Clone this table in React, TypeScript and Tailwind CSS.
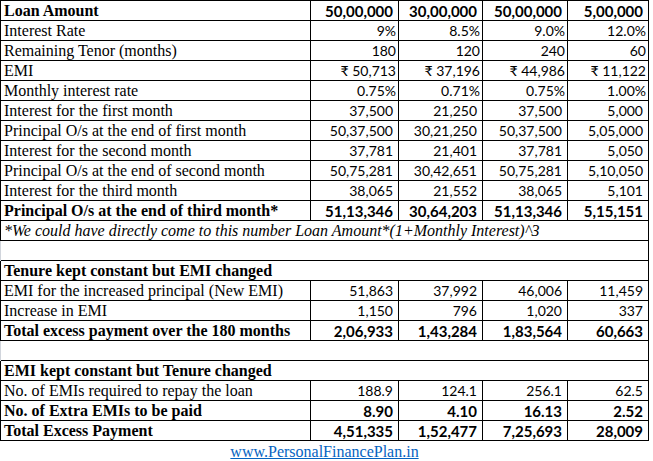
const serif = "font-['Liberation_Serif','DejaVu_Serif',serif]";
const num = "font-['Lato','Liberation_Sans',sans-serif]";

type Row = {
    label: string;
    values: string[];
    bold?: boolean;
    tight?: boolean;
};

const block1: Row[] = [
    { label: "Loan Amount", values: ["50,00,000", "30,00,000", "50,00,000", "5,00,000"], bold: true },
    { label: "Interest Rate", values: ["9%", "8.5%", "9.0%", "12.0%"], tight: true },
    { label: "Remaining Tenor (months)", values: ["180", "120", "240", "60"], tight: true },
    { label: "EMI", values: ["₹ 50,713", "₹ 37,196", "₹ 44,986", "₹ 11,122"], tight: true },
    { label: "Monthly interest rate", values: ["0.75%", "0.71%", "0.75%", "1.00%"], tight: true },
    { label: "Interest for the first month", values: ["37,500", "21,250", "37,500", "5,000"] },
    { label: "Principal O/s at the end of first month", values: ["50,37,500", "30,21,250", "50,37,500", "5,05,000"] },
    { label: "Interest for the second month", values: ["37,781", "21,401", "37,781", "5,050"] },
    { label: "Principal O/s at the end of second month", values: ["50,75,281", "30,42,651", "50,75,281", "5,10,050"] },
    { label: "Interest for the third month", values: ["38,065", "21,552", "38,065", "5,101"] },
    { label: "Principal O/s at the end of third month*", values: ["51,13,346", "30,64,203", "51,13,346", "5,15,151"], bold: true },
];

const block2: Row[] = [
    { label: "EMI for the increased principal (New EMI)", values: ["51,863", "37,992", "46,006", "11,459"] },
    { label: "Increase in EMI", values: ["1,150", "796", "1,020", "337"] },
    { label: "Total excess payment over the 180 months", values: ["2,06,933", "1,43,284", "1,83,564", "60,663"], bold: true },
];

const block3: Row[] = [
    { label: "No. of EMIs required to repay the loan", values: ["188.9", "124.1", "256.1", "62.5"] },
    { label: "No. of Extra EMIs to be paid", values: ["8.90", "4.10", "16.13", "2.52"], bold: true },
    { label: "Total Excess Payment", values: ["4,51,335", "1,52,477", "7,25,693", "28,009"], bold: true },
];

const widths = ["w-[88px]", "w-[84px]", "w-[85px]", "w-[81px]"];

const DataRow = ({ row }: { row: Row }) => (
    <div className={`flex h-[20px] border-b border-black ${row.bold ? "font-bold" : ""}`}>
        <div className={`${serif} w-[310px] shrink-0 border-r border-black pl-[3px] text-[16px] leading-[19px] whitespace-nowrap`}>
            {row.label}
        </div>
        {row.values.map((v, i) => (
            <div key={i} className={`${num} ${widths[i]} ${row.tight ? "pr-[2px]" : "pr-[5px]"} ${row.bold ? "text-[15px]" : "text-[14px]"} shrink-0 border-r border-black text-right leading-[20px] whitespace-nowrap`}>
                {v}
            </div>
        ))}
    </div>
);

const WideRow = ({ children, className = "" }: { children?: React.ReactNode; className?: string }) => (
    <div className={`h-[20px] border-b border-black pl-[3px] text-[16px] leading-[19px] whitespace-nowrap ${serif} ${className}`}>
        {children}
    </div>
);

export default function App() {
    return (
        <div className="min-h-screen bg-white text-black">
            <div className="w-[649px]">
                <div className="border-t border-l border-black">
                    {block1.map((r) => <DataRow key={r.label} row={r} />)}
                    <WideRow className="italic border-r">
                        *We could have directly come to this number Loan Amount*(1+Monthly Interest)^3
                    </WideRow>
                </div>
                <div className="border-l border-gray-300">
                    <WideRow className="border-r border-r-black" />
                </div>
                <div className="border-l border-black">
                    <WideRow className="font-bold border-r">Tenure kept constant but EMI changed</WideRow>
                    {block2.map((r) => <DataRow key={r.label} row={r} />)}
                </div>
                <div className="border-l border-gray-300">
                    <WideRow className="border-r border-r-black" />
                </div>
                <div className="border-l border-black">
                    <WideRow className="font-bold border-r">EMI kept constant but Tenure changed</WideRow>
                    {block3.map((r) => <DataRow key={r.label} row={r} />)}
                </div>
                <div className={`${serif} h-[21px] pt-[1px] text-center text-[16px] leading-[19px]`}>
                    <a href="#" className="text-[#0563c1] underline">www.PersonalFinancePlan.in</a>
                </div>
            </div>
        </div>
    );
}
